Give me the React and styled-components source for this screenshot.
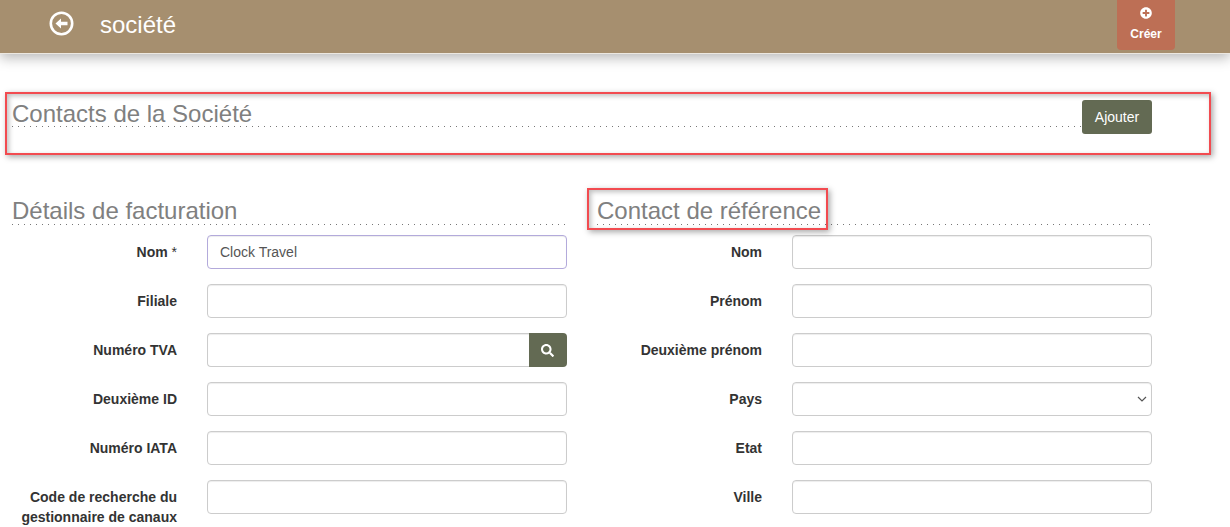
import React from 'react';
import styled, { createGlobalStyle } from 'styled-components';
import { FaPlusCircle, FaSearch } from 'react-icons/fa';

const GlobalStyle = createGlobalStyle`
  html, body {
    margin: 0;
    padding: 0;
    height: 527px;
    overflow: hidden;
    background: #fff;
    font-family: "Liberation Sans", Arial, sans-serif;
  }
`;

const Page = styled.div`
  position: relative;
  width: 1230px;
  height: 527px;
  overflow: hidden;
`;

const Header = styled.header`
  height: 53px;
  background: #a68f6f;
  border-bottom: 1px solid #ece8e1;
  box-shadow: 0 4px 12px rgba(0, 0, 0, 0.28);
  display: flex;
  align-items: flex-start;
  padding: 0 55px 0 49px;
`;

const BackIcon = styled.svg`
  width: 25px;
  height: 25px;
  margin-top: 11px;
`;

const PageName = styled.h1`
  margin: 11px 0 0 26px;
  font-size: 24px;
  line-height: 28px;
  font-weight: 400;
  color: #fff;
  flex: 1;
`;

const CreateButton = styled.button`
  width: 58px;
  height: 50px;
  border: 0;
  border-radius: 0 0 4px 4px;
  background: #bd6f55;
  color: #fff;
  font: 700 12px "Liberation Sans", Arial, sans-serif;
  display: flex;
  flex-direction: column;
  align-items: center;
  padding: 7px 0 0;
  gap: 8px;
  svg { width: 12px; height: 12px; }
`;

const Content = styled.main`
  padding: 46px 78px 0 12px;
`;

const SectionBar = styled.div`
  display: flex;
  align-items: flex-start;
  justify-content: space-between;
  height: 97px;
`;

const DottedHeading = styled.div`
  height: ${props => props.$height}px;
  background-image: linear-gradient(to right, #777 1px, transparent 1px);
  background-size: 6px 1px;
  background-repeat: repeat-x;
  background-position: left bottom;
`;

const ContactsHeading = styled(DottedHeading)`
  flex: 1;
`;

const ColumnHeading = styled(DottedHeading)`
  margin-bottom: 10px;
`;

const SectionTitle = styled.h2`
  margin: 0;
  font-size: 24px;
  line-height: 28px;
  font-weight: 400;
  color: #808080;
`;

const AddButton = styled.button`
  width: 70px;
  height: 34px;
  border: 0;
  border-radius: 3px;
  background: #636a53;
  color: #fff;
  font: 400 14px "Liberation Sans", Arial, sans-serif;
`;

const Columns = styled.div`
  display: grid;
  grid-template-columns: 555px 555px;
  column-gap: 30px;
`;

const Row = styled.div`
  display: grid;
  grid-template-columns: 165px 360px;
  column-gap: 30px;
  margin-bottom: 15px;
  height: 34px;
`;

const Label = styled.label`
  text-align: right;
  font-size: 14px;
  font-weight: 700;
  line-height: 20px;
  color: #333;
  padding-top: 7px;
`;

const Required = styled.span`
  font-weight: 400;
`;

const Input = styled.input`
  box-sizing: border-box;
  width: 100%;
  height: 34px;
  border: 1px solid ${props => (props.$focused ? '#b3aadb' : '#ccc')};
  border-radius: 4px;
  padding: 6px 12px;
  font: 400 14px "Liberation Sans", Arial, sans-serif;
  color: #555;
  background: #fff;
  box-shadow: inset 0 1px 1px rgba(0, 0, 0, 0.075);
  outline: none;
`;

const InputGroup = styled.div`
  display: flex;
`;

const GroupedInput = styled(Input)`
  flex: 1;
  min-width: 0;
  border-right: 0;
  border-radius: 4px 0 0 4px;
`;

const SearchButton = styled.button`
  width: 38px;
  height: 34px;
  border: 0;
  border-radius: 0 4px 4px 0;
  background: #636a53;
  color: #fff;
  display: flex;
  align-items: center;
  justify-content: center;
  padding: 0 1px 0 0;
  svg { width: 13px; height: 13px; }
`;

const SelectWrap = styled.div`
  position: relative;
  svg {
    position: absolute;
    right: 5px;
    top: 13px;
    width: 10px;
    height: 8px;
  }
`;

const Select = styled(Input).attrs({ as: 'select' })`
  appearance: none;
`;

const RedFrame = styled.div`
  position: absolute;
  box-sizing: border-box;
  border: 2px solid #f24b50;
  box-shadow: 2px 2px 6px rgba(0, 0, 0, 0.35), inset 2px 2px 5px rgba(0, 0, 0, 0.25);
  pointer-events: none;
  left: ${props => props.$left}px;
  top: ${props => props.$top}px;
  width: ${props => props.$width}px;
  height: ${props => props.$height}px;
`;

const Chevron = () => (
  <svg viewBox="0 0 10 8" fill="none" stroke="#555" strokeWidth="1.2">
    <path d="M1 2l4 4 4-4" />
  </svg>
);

const billing = ['Filiale'];
const billingAfter = ['Deuxième ID', 'Numéro IATA'];
const contactTop = ['Nom', 'Prénom', 'Deuxième prénom'];
const contactBottom = ['Etat', 'Ville'];

const App = () => (
  <Page>
    <GlobalStyle />
    <Header>
      <BackIcon viewBox="0 0 25 25">
        <circle cx="12.5" cy="12.5" r="10.7" fill="none" stroke="#fff" strokeWidth="2.6" />
        <path d="M6.5 12.5l5.5-5v3.2h6.5v3.6H12v3.2z" fill="#fff" />
      </BackIcon>
      <PageName>société</PageName>
      <CreateButton>
        <FaPlusCircle />
        Créer
      </CreateButton>
    </Header>
    <Content>
      <SectionBar>
        <ContactsHeading $height={27}>
          <SectionTitle>Contacts de la Société</SectionTitle>
        </ContactsHeading>
        <AddButton>Ajouter</AddButton>
      </SectionBar>
      <Columns>
        <section>
          <ColumnHeading $height={28}>
            <SectionTitle>Détails de facturation</SectionTitle>
          </ColumnHeading>
          <Row>
            <Label>Nom <Required>*</Required></Label>
            <Input $focused defaultValue="Clock Travel" />
          </Row>
          {billing.map(name => (
            <Row key={name}>
              <Label>{name}</Label>
              <Input />
            </Row>
          ))}
          <Row>
            <Label>Numéro TVA</Label>
            <InputGroup>
              <GroupedInput />
              <SearchButton><FaSearch /></SearchButton>
            </InputGroup>
          </Row>
          {billingAfter.map(name => (
            <Row key={name}>
              <Label>{name}</Label>
              <Input />
            </Row>
          ))}
          <Row>
            <Label>Code de recherche du gestionnaire de canaux</Label>
            <Input />
          </Row>
        </section>
        <section>
          <ColumnHeading $height={28}>
            <SectionTitle>Contact de référence</SectionTitle>
          </ColumnHeading>
          {contactTop.map(name => (
            <Row key={name}>
              <Label>{name}</Label>
              <Input />
            </Row>
          ))}
          <Row>
            <Label>Pays</Label>
            <SelectWrap>
              <Select />
              <Chevron />
            </SelectWrap>
          </Row>
          {contactBottom.map(name => (
            <Row key={name}>
              <Label>{name}</Label>
              <Input />
            </Row>
          ))}
        </section>
      </Columns>
    </Content>
    <RedFrame $left={5} $top={92} $width={1206} $height={63} />
    <RedFrame $left={587} $top={188} $width={241} $height={42} />
  </Page>
);

export default App;
